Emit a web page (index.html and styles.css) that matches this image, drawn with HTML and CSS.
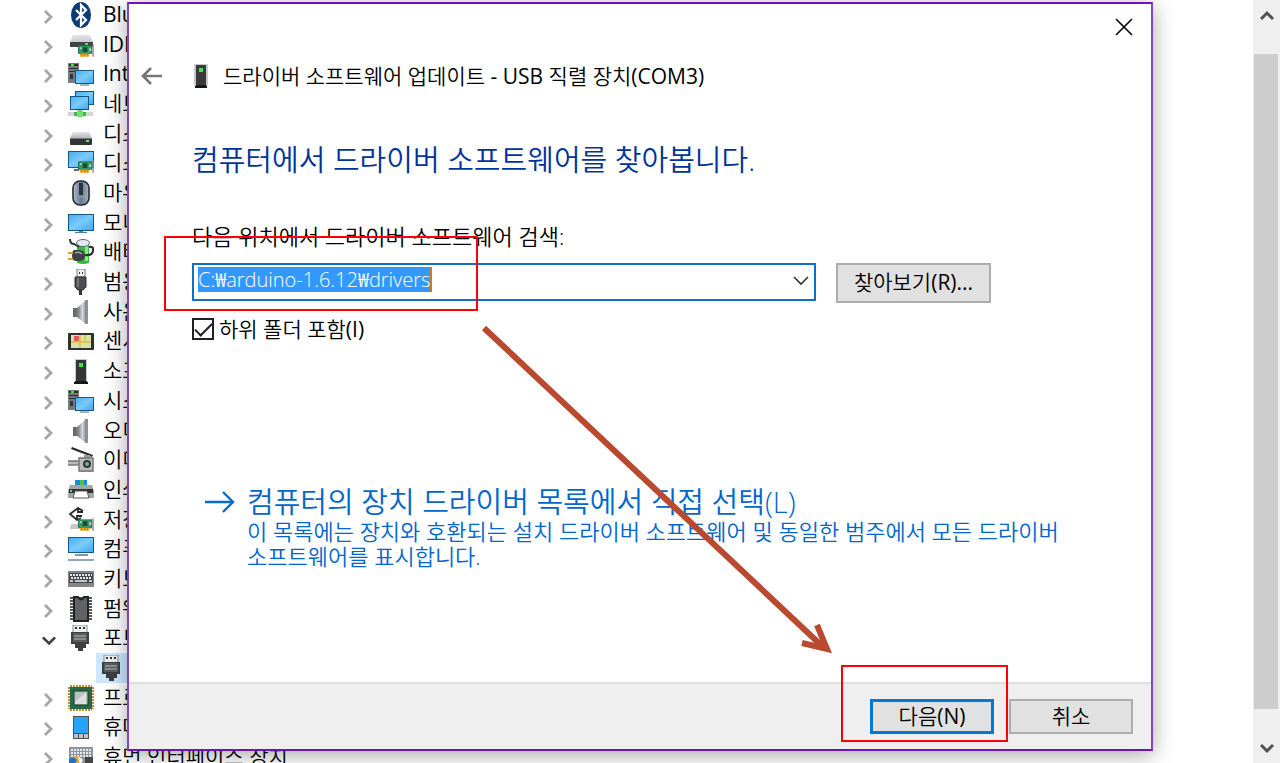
FILE: index.html
```
<!DOCTYPE html>
<html lang="ko">
<head>
<meta charset="utf-8">
<title>드라이버 소프트웨어 업데이트</title>
<link rel="stylesheet" href="styles.css">
</head>
<body>
<svg class="defs" aria-hidden="true">
  <defs>
    <linearGradient id="blue" x1="0" y1="0" x2="1" y2="1"><stop offset="0" stop-color="#48b0ee"/><stop offset=".5" stop-color="#7ccbfb"/><stop offset="1" stop-color="#3fa9f5"/></linearGradient>
    <linearGradient id="silver" x1="0" y1="0" x2="1" y2="0"><stop offset="0" stop-color="#666"/><stop offset=".6" stop-color="#d5dae0"/><stop offset="1" stop-color="#888"/></linearGradient>
    <linearGradient id="steel" x1="0" y1="0" x2="1" y2="0"><stop offset="0" stop-color="#b3bfcc"/><stop offset=".5" stop-color="#66788b"/><stop offset="1" stop-color="#a7b4c2"/></linearGradient>
    <linearGradient id="drive" x1="0" y1="0" x2="0" y2="1"><stop offset="0" stop-color="#e4e6e8"/><stop offset="1" stop-color="#b4b8bc"/></linearGradient>
    <symbol id="chev" viewBox="0 0 14 16"><path d="M3 2l6 6-6 6" fill="none" stroke="#a6a6a6" stroke-width="2.8"/></symbol>
    <symbol id="chev-open" viewBox="0 0 16 14"><path d="M1 4l7 7 7-7" fill="none" stroke="#404040" stroke-width="3"/></symbol>
    <symbol id="card" viewBox="0 0 17 14"><path d="M0 1h15v9H0z" fill="#1f7450"/><path d="M1 2h13v7H1z" fill="#3a9a6c"/><path d="M5 3h5v5H5z" fill="#174c36"/><path d="M2 3h2v2H2zM12 4h2v3h-2z" fill="#a5dfb8"/><path d="M2 10h10v3H2z" fill="#f0a81c"/><path d="M4 10v3M7 10v3M10 10v3" stroke="#c98010"/><path d="M16 0v13" stroke="#888" stroke-width="1.5"/></symbol>
    <symbol id="bluetooth" viewBox="0 0 26 26"><ellipse cx="13" cy="13" rx="10" ry="13" fill="#0c3c78"/><path d="M8 8l10 10-5 5V3l5 5L8 18" fill="none" stroke="#fff" stroke-width="2.2"/></symbol>
    <symbol id="ide" viewBox="0 0 26 26"><path d="M5 3h17l3 7v5H2v-5z" fill="url(#drive)"/><path d="M2 10h23v5H2z" fill="#414346"/><path d="M17 11h3v2h-3z" fill="#4be53c"/><use href="#card" x="10" y="12" width="16" height="14"/></symbol>
    <symbol id="system" viewBox="0 0 26 26"><path d="M0 2h11v20H0z" fill="#777b80"/><path d="M1 3h9v2H1zM1 7h9v1H1zM1 10h6v1H1z" fill="#292c30"/><path d="M3 3h3v2H3z" fill="#4ee13e"/><path d="M2 13h3v5H2z" fill="#333"/><path d="M7 9h19v14H7z" fill="#175a86"/><path d="M8 10h17v12H8z" fill="url(#blue)"/><path d="M12 24h9" stroke="#7f9dab" stroke-width="1.500"/></symbol>
    <symbol id="network" viewBox="0 0 26 26"><path d="M7 0h19v14H7z" fill="#125887"/><path d="M8 1h17v12H8z" fill="url(#blue)"/><path d="M2 5h19v14H2z" fill="#125887"/><path d="M3 6h17v12H3z" fill="url(#blue)"/><path d="M10 19h4v3h-4z" fill="#72b96e"/><path d="M0 21h25v4H0z" fill="#d3d5d6"/><path d="M6 21h12v4H6z" fill="#35be45"/><path d="M9 20h6v6H9z" fill="#77dc75"/></symbol>
    <symbol id="disk" viewBox="0 0 26 26"><path d="M5 11h16l3 6H2z" fill="url(#drive)"/><path d="M2 17h22v6q0 1-1 1H3q-1 0-1-1z" fill="#333539"/><path d="M2 17h22v1H2z" fill="#77797c"/><path d="M18 19h3v2h-3z" fill="#59f34b"/></symbol>
    <symbol id="display" viewBox="0 0 26 26"><path d="M0 1h26v17H0z" fill="#125887"/><path d="M1 2h24v15H1z" fill="url(#blue)"/><path d="M6 19h5v2H6z" fill="#547480"/><use href="#card" x="10" y="10" width="16" height="14"/></symbol>
    <symbol id="mouse" viewBox="0 0 26 26"><rect x="5" y="1" width="16" height="24" rx="7" fill="url(#steel)" stroke="#222a34" stroke-width="1.600"/><path d="M11 3h4v12h-4z" fill="#293440"/><path d="M7 17h12" stroke="#8d9dac"/></symbol>
    <symbol id="monitor" viewBox="0 0 26 26"><path d="M0 4h26v17H0z" fill="#125887"/><path d="M1 5h24v15H1z" fill="url(#blue)"/><path d="M11 21h4v1h4v1H7v-1h4z" fill="#47819d"/></symbol>
    <symbol id="battery" viewBox="0 0 26 26"><path d="M9 4h12v20q-6 2-12 0z" fill="#39b54a"/><path d="M17 5h3v17h-3z" fill="#8dec78"/><ellipse cx="15" cy="4" rx="6.500" ry="3.500" fill="#e6e9f5" stroke="#667"/><path d="M2 0q0 5 4 5l5 3" fill="none" stroke="#333" stroke-width="2"/><path d="M21 8q5-1 4 4-1 5-8 4" fill="none" stroke="#303030" stroke-width="2.200"/><path d="M6 11h5q6 0 6 6 0 5-6 5H7q-3-1-3-5 0-5 2-6z" fill="#3e4145"/><path d="M7 14q4-2 7 1" fill="none" stroke="#a0a4a8" stroke-width="1.500"/><path d="M0 14h5M0 20h5" stroke="#d9a41e" stroke-width="2"/></symbol>
    <symbol id="usb" viewBox="0 0 26 26"><path d="M9 0h8v8H9z" fill="#eee" stroke="#777"/><path d="M11 3h1v2h-1zM14 3h1v2h-1z" fill="#333"/><path d="M7 8h11v10l-3 3h-5l-3-3z" fill="#4b4d50" stroke="#333"/><path d="M10 9v9" stroke="#75787b" stroke-width="2"/><path d="M11 21h3v5h-3z" fill="#333"/></symbol>
    <symbol id="speaker" viewBox="0 0 26 26"><path d="M5 9h4v9H5z" fill="#656b73"/><path d="M9 9l9-8v24l-9-7z" fill="url(#silver)"/><path d="M9 9v9" stroke="#888"/><path d="M17 1h3v24h-3z" fill="#8d9196"/></symbol>
    <symbol id="sensor" viewBox="0 0 26 26"><rect y="5" width="26" height="17" rx="1" fill="#303030"/><path d="M3 7h20v13H3z" fill="#d3e6a6"/><path d="M3 14h20M12 7v13M17 7v7" stroke="#e7b54d" stroke-width="1.500"/><path d="M6 8h5v5H6z" fill="#e25a5d"/></symbol>
    <symbol id="software" viewBox="0 0 26 26"><path d="M7 1h12v22H7z" fill="#c8cacb"/><path d="M8 2h10v21H8z" fill="#343638"/><path d="M11 5h4v4h-4z" fill="#43e63b"/><path d="M7 23h12v1h1v2H6v-2h1z" fill="#171717"/></symbol>
    <symbol id="imaging" viewBox="0 0 26 26"><path d="M4 0l21 8-1 2L3 2z" fill="#2c2c2c"/><path d="M0 14h11v4H0zM11 11h14v14H11z" fill="#bbb"/><path d="M0 14h10M0 18h10" stroke="#777" stroke-width="1.500"/><path d="M16 8h6v3h-6z" fill="#999"/><path d="M11 11h14v13H11z" fill="none" stroke="#777" stroke-width="1.500"/><circle cx="19" cy="17" r="4" fill="#333"/><circle cx="19" cy="17" r="2" fill="#65b99f"/></symbol>
    <symbol id="printer" viewBox="0 0 26 26"><path d="M7 3h12v6H7z" fill="#198ad8"/><path d="M12 3h4v5h-4z" fill="#48c24a"/><path d="M2 8h22l2 6v7H0v-7z" fill="#a2a6a9"/><path d="M1 12h24v4H1z" fill="#2e3032"/><path d="M7 14h12l2 7H5z" fill="#fff" stroke="#555"/><path d="M2 13h2v2H2z" fill="#6d6"/></symbol>
    <symbol id="storage" viewBox="0 0 26 26"><path d="M3 17h20l2 5H2z" fill="#c6c8c9"/><path d="M15 4l-5-3-8 6 7 6 4-2M10 1v4h5M9 13V9h5" fill="none" stroke="#292929" stroke-width="1.800"/><use href="#card" x="10" y="11" width="16" height="14"/></symbol>
    <symbol id="computer" viewBox="0 0 26 26"><path d="M0 1h26v16H0z" fill="#125887"/><path d="M1 2h24v14H1z" fill="url(#blue)"/><path d="M7 19h13" stroke="#4b7b91" stroke-width="1.500"/><path d="M0 24h26" stroke="#8cabbc" stroke-width="2"/></symbol>
    <symbol id="keyboard" viewBox="0 0 26 26"><path d="M0 5h26v16H0z" fill="#81868a"/><path d="M1 7h24v10H1z" fill="#43494d"/><path d="M2 9h22M3 12h20" stroke="#e6e6e6" stroke-width="2" stroke-dasharray="2 1"/><path d="M2 15h3m2 0h12m2 0h3" stroke="#eee" stroke-width="1.500"/></symbol>
    <symbol id="firmware" viewBox="0 0 26 26"><path d="M2 2h22M2 5h22M2 8h22M2 11h22M2 14h22M2 17h22M2 20h22M2 23h22" stroke="#222" stroke-width="1.500"/><path d="M6 1h4q3 5 6 0h4v24H6z" fill="#606265" stroke="#202224" stroke-width="2"/></symbol>
    <symbol id="port" viewBox="0 0 26 26"><path d="M5 0h14v9H5z" fill="#eee" stroke="#888"/><path d="M7 2h2v2H7zM11 2h2v2h-2zM15 2h2v2h-2z" fill="#333"/><path d="M3 7h18v12h-3v4h-3v3h-5v-3H7v-4H3z" fill="#3d3f41"/><path d="M5 8h14v9H5z" fill="#5a5c5f"/><path d="M6 11h12M6 14h12" stroke="#9b9ea1" stroke-width="1.500"/></symbol>
    <symbol id="cpu" viewBox="0 0 26 26"><path d="M2 1h22M2 25h22M1 2v22M25 2v22" stroke="#bd912b" stroke-width="2" stroke-dasharray="2 1"/><path d="M2 2h22v22H2z" fill="#286749"/><path d="M6 6h14v14H6z" fill="#b8c0b9" stroke="#173f2d"/><path d="M7 17L18 7v12H7z" fill="#dedede"/></symbol>
    <symbol id="phone" viewBox="0 0 26 26"><path d="M5 2h16v23H5z" fill="#4c5357"/><path d="M6 3h14v16H6z" fill="#27a3fb"/><path d="M6 20h4v4H6zM11 20h4v4h-4zM16 20h4v4h-4z" fill="#bcc2c5"/></symbol>
    <symbol id="hid" viewBox="0 0 26 26"><path d="M1 3h24v17H1z" fill="#8e969c"/><path d="M3 6h20M3 9h20M3 12h20" stroke="#fff" stroke-width="1.500" stroke-dasharray="2 1"/><circle cx="8" cy="17" r="5" fill="#e8a53c"/><path d="M1 15q4-4 8 1l-3 5H1z" fill="#2472c5"/><path d="M10 12l5 4-3 5z" fill="#fff"/><path d="M17 13h8v8h-8z" fill="#444"/></symbol>
    <symbol id="pc-slim" viewBox="0 0 16 26"><path d="M1 1h14v22H1z" fill="#c8cacb"/><path d="M3 2h10v20H3z" fill="#383a3c"/><path d="M6 5h4v4H6z" fill="#43e63b"/><path d="M3 22h10v1h1v2H2v-2h1z" fill="#171717"/></symbol>
  </defs>
</svg>

<main class="desktop">
  <ul class="tree">
    <li class="row"><svg class="chev"><use href="#chev"/></svg><svg class="icon"><use href="#bluetooth"/></svg><span>Blu</span></li>
    <li class="row"><svg class="chev"><use href="#chev"/></svg><svg class="icon"><use href="#ide"/></svg><span>IDE</span></li>
    <li class="row"><svg class="chev"><use href="#chev"/></svg><svg class="icon"><use href="#system"/></svg><span>Inte</span></li>
    <li class="row"><svg class="chev"><use href="#chev"/></svg><svg class="icon"><use href="#network"/></svg><span>네트</span></li>
    <li class="row"><svg class="chev"><use href="#chev"/></svg><svg class="icon"><use href="#disk"/></svg><span>디스</span></li>
    <li class="row"><svg class="chev"><use href="#chev"/></svg><svg class="icon"><use href="#display"/></svg><span>디스</span></li>
    <li class="row"><svg class="chev"><use href="#chev"/></svg><svg class="icon"><use href="#mouse"/></svg><span>마우</span></li>
    <li class="row"><svg class="chev"><use href="#chev"/></svg><svg class="icon"><use href="#monitor"/></svg><span>모니</span></li>
    <li class="row"><svg class="chev"><use href="#chev"/></svg><svg class="icon"><use href="#battery"/></svg><span>배터</span></li>
    <li class="row"><svg class="chev"><use href="#chev"/></svg><svg class="icon"><use href="#usb"/></svg><span>범용</span></li>
    <li class="row"><svg class="chev"><use href="#chev"/></svg><svg class="icon"><use href="#speaker"/></svg><span>사운</span></li>
    <li class="row"><svg class="chev"><use href="#chev"/></svg><svg class="icon"><use href="#sensor"/></svg><span>센서</span></li>
    <li class="row"><svg class="chev"><use href="#chev"/></svg><svg class="icon"><use href="#software"/></svg><span>소프</span></li>
    <li class="row"><svg class="chev"><use href="#chev"/></svg><svg class="icon"><use href="#system"/></svg><span>시스</span></li>
    <li class="row"><svg class="chev"><use href="#chev"/></svg><svg class="icon"><use href="#speaker"/></svg><span>오디</span></li>
    <li class="row"><svg class="chev"><use href="#chev"/></svg><svg class="icon"><use href="#imaging"/></svg><span>이미</span></li>
    <li class="row"><svg class="chev"><use href="#chev"/></svg><svg class="icon"><use href="#printer"/></svg><span>인쇄</span></li>
    <li class="row"><svg class="chev"><use href="#chev"/></svg><svg class="icon"><use href="#storage"/></svg><span>저장</span></li>
    <li class="row"><svg class="chev"><use href="#chev"/></svg><svg class="icon"><use href="#computer"/></svg><span>컴퓨</span></li>
    <li class="row"><svg class="chev"><use href="#chev"/></svg><svg class="icon"><use href="#keyboard"/></svg><span>키보</span></li>
    <li class="row"><svg class="chev"><use href="#chev"/></svg><svg class="icon"><use href="#firmware"/></svg><span>펌웨</span></li>
    <li class="row"><svg class="chev"><use href="#chev-open"/></svg><svg class="icon"><use href="#port"/></svg><span>포트</span></li>
    <li class="row child"><svg class="icon"><use href="#port"/></svg></li>
    <li class="row"><svg class="chev"><use href="#chev"/></svg><svg class="icon"><use href="#cpu"/></svg><span>프로</span></li>
    <li class="row"><svg class="chev"><use href="#chev"/></svg><svg class="icon"><use href="#phone"/></svg><span>휴대</span></li>
    <li class="row"><svg class="chev"><use href="#chev"/></svg><svg class="icon"><use href="#hid"/></svg><span>휴먼 인터페이스 장치</span></li>
  </ul>
  <div class="scrollbar">
    <svg class="sb-arrow" viewBox="0 0 14 12"><path d="M1 10l6-6 6 6" fill="none" stroke="#505050" stroke-width="3"/></svg>
    <div class="thumb"></div>
    <svg class="sb-arrow" viewBox="0 0 14 12"><path d="M1 2l6 6 6-6" fill="none" stroke="#505050" stroke-width="3"/></svg>
  </div>

  <section class="dialog" role="dialog" aria-labelledby="dlg-title">
    <button class="close" aria-label="닫기"><svg width="18" height="18" viewBox="0 0 18 18"><path d="M1 1l16 16M17 1L1 17" stroke="#000" stroke-width="1.600"/></svg></button>
    <header class="titlebar">
      <button class="back" aria-label="뒤로"><svg width="22" height="20" viewBox="0 0 22 20"><path d="M21 10H2M10 2l-8 8 8 8" fill="none" stroke="#777" stroke-width="2.600"/></svg></button>
      <svg class="title-icon"><use href="#pc-slim"/></svg>
      <span id="dlg-title">드라이버 소프트웨어 업데이트 - USB 직렬 장치(COM3)</span>
    </header>
    <div class="content">
      <h1>컴퓨터에서 드라이버 소프트웨어를 찾아봅니다.</h1>
      <label class="path-label" for="path">다음 위치에서 드라이버 소프트웨어 검색:</label>
      <div class="path-row">
        <div class="combo">
          <input id="path" type="text" value="C:₩arduino-1.6.12₩drivers">
          <button class="drop" aria-label="목록 열기"><svg width="16" height="10" viewBox="0 0 16 10"><path d="M1 1l7 7 7-7" fill="none" stroke="#333" stroke-width="1.600"/></svg></button>
        </div>
        <button class="btn browse">찾아보기(R)...</button>
      </div>
      <label class="check"><input type="checkbox" checked><span>하위 폴더 포함(I)</span></label>
      <a class="command" href="#">
        <svg class="cmd-arrow" viewBox="0 0 30 24"><path d="M0 12h28M18 2l10 10-10 10" fill="none" stroke="#0a6cc8" stroke-width="2.400"/></svg>
        <strong>컴퓨터의 장치 드라이버 목록에서 직접 선택(L)</strong>
        <span>이 목록에는 장치와 호환되는 설치 드라이버 소프트웨어 및 동일한 범주에서 모든 드라이버<br>소프트웨어를 표시합니다.</span>
      </a>
    </div>
    <footer class="footer">
      <button class="btn next">다음(N)</button>
      <button class="btn">취소</button>
    </footer>
    <div class="mark mark-path"></div>
    <div class="mark mark-next"></div>
    <svg class="pointer" width="356" height="336" viewBox="0 0 356 336"><path d="M5 5L344 324" fill="none" stroke="#b94a30" stroke-width="6"/><path d="M323 320l25 6-10-24" fill="none" stroke="#b94a30" stroke-width="6"/></svg>
  </section>
</main>
</body>
</html>
```
FILE: styles.css
```
* { box-sizing: border-box; }
body { margin: 0; background: #fff; color: #000; font-family: "Open Sans", "Noto Sans CJK KR DemiLight", "Noto Sans CJK KR", "Noto Sans", sans-serif; font-size: 21px; font-weight: 400; overflow: hidden; }
button, input { font: inherit; color: inherit; margin: 0; }
button { padding: 0; border: 0; background: none; }
svg { display: block; flex: none; }
.defs { position: absolute; width: 0; height: 0; }
.desktop { position: relative; display: flex; height: 100vh; min-height: 600px; overflow: hidden; }

.tree { flex: 1; list-style: none; margin: 0; padding: 0 0 0 42px; display: grid; grid-template-rows: repeat(26, 1fr); height: 772px; }
.row { display: flex; align-items: center; min-height: 0; line-height: 28px; white-space: nowrap; }
.row span { padding-bottom: 2px; }
.chev { width: 14px; height: 16px; margin: 4px 12px 0 0; }
.icon { width: 26px; height: 26px; margin-right: 9px; }
.child { margin-left: 54px; padding-left: 3px; width: 160px; background: #cce8ff; }

.scrollbar { width: 27px; background: #efefef; display: flex; flex-direction: column; align-items: center; padding: 9px 0 8px; }
.sb-arrow { width: 14px; height: 12px; }
.thumb { flex: 1; align-self: stretch; margin: 33px 2px 34px 1px; background: #cdcdcd; }

.dialog { position: absolute; left: 127px; right: 127px; top: 2px; bottom: 12px; display: flex; flex-direction: column; background: #fff; border: 2px solid; border-color: #6a14bd #8640cb; box-shadow: 0 4px 20px rgba(0, 0, 0, .35); }
.close { position: absolute; right: 18px; top: 14px; }
.titlebar { display: flex; align-items: center; height: 32px; margin: 56px 12px 0; line-height: 32px; }
.title-icon { width: 16px; height: 26px; margin: 0 14px 0 30px; }
.content { flex: 1; padding: 48px 62px 0 63px; }
h1 { margin: 0; font-size: 29px; line-height: 40px; font-weight: 350; color: #003399; }
.path-label { display: block; margin-top: 40px; font-size: 22px; line-height: 32px; font-weight: 350; }
.path-row { display: flex; align-items: center; margin-top: 8px; gap: 20px; }
.combo { width: 624px; height: 38px; border: 2px solid #0f6fc6; display: flex; align-items: center; padding: 0 5px 5px 4px; background: #fff; }
.combo input { field-sizing: content; height: 25px; font-size: 20px; font-weight: 350; line-height: 25px; padding: 0; border: 0; border-right: 2px solid #d07a20; outline: 0; border-radius: 0; background: #3399ff; color: #fff; }
.drop { margin-left: auto; padding: 4px 0 0; }
.btn { height: 35px; width: 124px; line-height: 28px; padding-bottom: 2px; background: #e1e1e1; border: 2px solid #adadad; }
.browse { width: 155px; height: 40px; margin-top: 3px; }
.check { display: flex; align-items: center; gap: 5px; margin-top: 10px; line-height: 32px; width: max-content; }
.check input { appearance: none; width: 22px; height: 22px; border: 2px solid #222; display: grid; place-items: center; }
.check input::after { content: ""; width: 15px; height: 7px; border: solid #222; border-width: 0 0 2px 2px; transform: translateY(-2px) rotate(-45deg); }
.command { display: grid; grid-template-columns: 30px 1fr; column-gap: 12px; align-items: center; margin: 140px 0 0 13px; color: #0066cc; text-decoration: none; }
.cmd-arrow { width: 30px; height: 24px; }
.command strong { font-size: 29px; line-height: 34px; font-weight: 350; }
.command span { grid-column: 2; font-size: 22px; line-height: 25px; font-weight: 350; white-space: nowrap; }
.footer { display: flex; justify-content: flex-end; align-items: center; gap: 15px; height: 67px; padding: 0 18px; background: #efefef; border-top: 2px solid #dfdfdf; }
.next { border: 3px solid #0078d7; }
.mark { position: absolute; border: 2px solid #f00; pointer-events: none; }
.mark-path { left: 35px; top: 232px; width: 314px; height: 75px; }
.mark-next { right: 143px; bottom: 7px; width: 167px; height: 77px; }
.pointer { position: absolute; left: 350px; top: 319px; pointer-events: none; }
```
